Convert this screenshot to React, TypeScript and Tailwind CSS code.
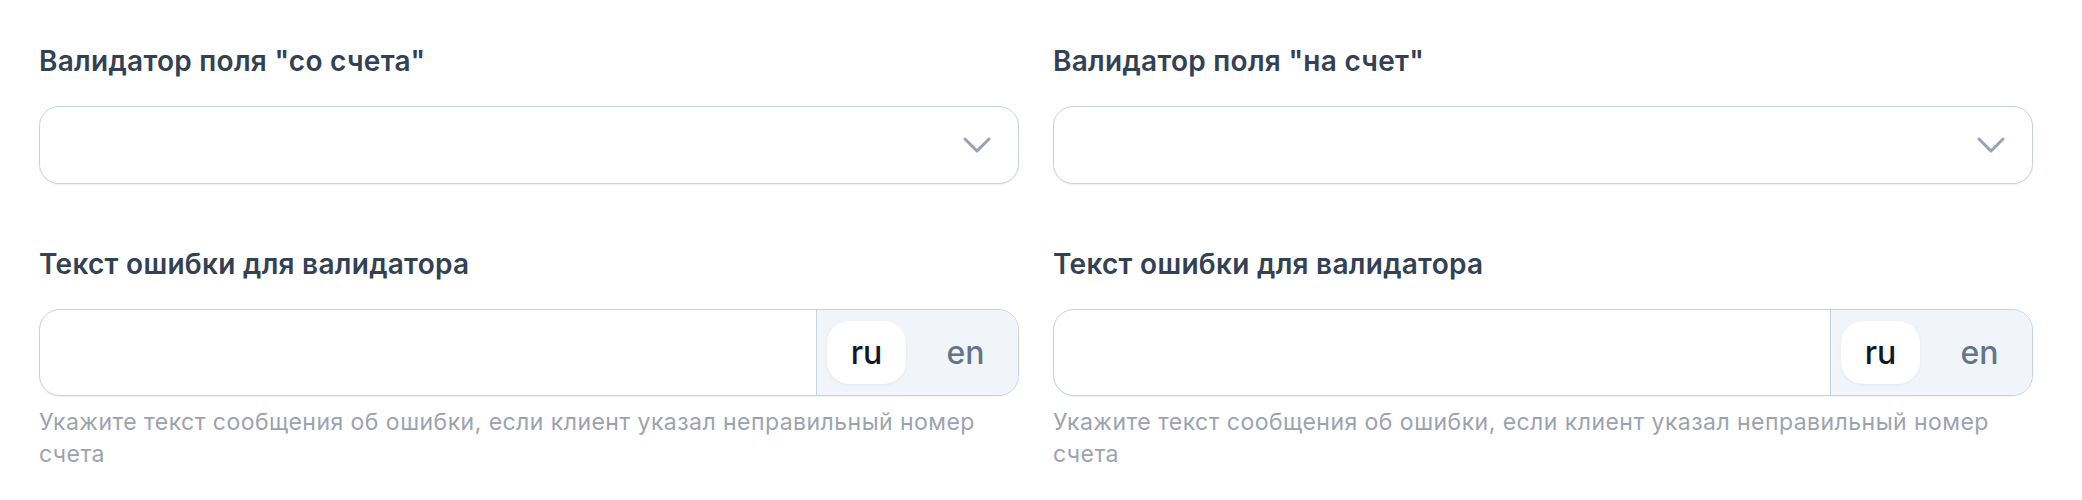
import { useState } from 'react';

function Chevron() {
  return (
    <svg width="28" height="16" viewBox="0 0 28 16" fill="none" className="shrink-0">
      <path d="M2 2l12 12L26 2" stroke="#94a3b8" strokeWidth="3" strokeLinecap="round" strokeLinejoin="round" />
    </svg>
  );
}

function SelectField({ label }: { label: string }) {
  return (
    <div className="flex flex-col">
      <label className="text-[28px] font-semibold leading-[36px] tracking-[0.01em] text-[#334155]">{label}</label>
      <button
        type="button"
        className="mt-[27px] flex h-[78px] w-full items-center justify-end rounded-[20px] border border-[#c8d2df] bg-white pr-[27px] shadow-[0_1px_2px_rgba(15,23,42,0.06)]"
      >
        <Chevron />
      </button>
    </div>
  );
}

function LocalizedInput() {
  const [lang, setLang] = useState<'ru' | 'en'>('ru');
  return (
    <div className="flex flex-col">
      <label className="text-[28px] font-semibold leading-[36px] tracking-[0.01em] text-[#334155]">
        Текст ошибки для валидатора
      </label>
      <div className="mt-[27px] flex h-[87px] w-full overflow-hidden rounded-[21px] border border-[#c8d2df] bg-white shadow-[0_1px_2px_rgba(15,23,42,0.06)]">
        <input className="min-w-0 flex-1 bg-transparent px-6 text-[24px] outline-none" />
        <div className="flex items-center gap-[20px] border-l border-[#c8d2df] bg-[#f1f4f9] pl-[10px] pr-[13px]">
          {(['ru', 'en'] as const).map((l) => (
            <button
              key={l}
              type="button"
              onClick={() => setLang(l)}
              className={
                lang === l
                  ? 'flex h-[63px] w-[79px] items-center justify-center rounded-[22px] bg-white text-[32px] font-medium text-[#0f172a] shadow-[0_1px_3px_rgba(15,23,42,0.06)]'
                  : 'flex h-[63px] w-[79px] items-center justify-center rounded-[22px] text-[32px] font-medium text-[#64748b]'
              }
            >
              {l}
            </button>
          ))}
        </div>
      </div>
      <p className="mt-[10px] pr-[20px] text-[23px] leading-[32px] tracking-[0.02em] text-[#9ca3af]">
        Укажите текст сообщения об ошибки, если клиент указал неправильный номер счета
      </p>
    </div>
  );
}

export default function App() {
  return (
    <div className="min-h-[500px] bg-white pl-[39px] pt-[43px] font-['Inter',sans-serif]">
      <div className="grid grid-cols-[980px_980px] gap-x-[34px] gap-y-[62px]">
        <SelectField label='Валидатор поля "со счета"' />
        <SelectField label='Валидатор поля "на счет"' />
        <LocalizedInput />
        <LocalizedInput />
      </div>
    </div>
  );
}
